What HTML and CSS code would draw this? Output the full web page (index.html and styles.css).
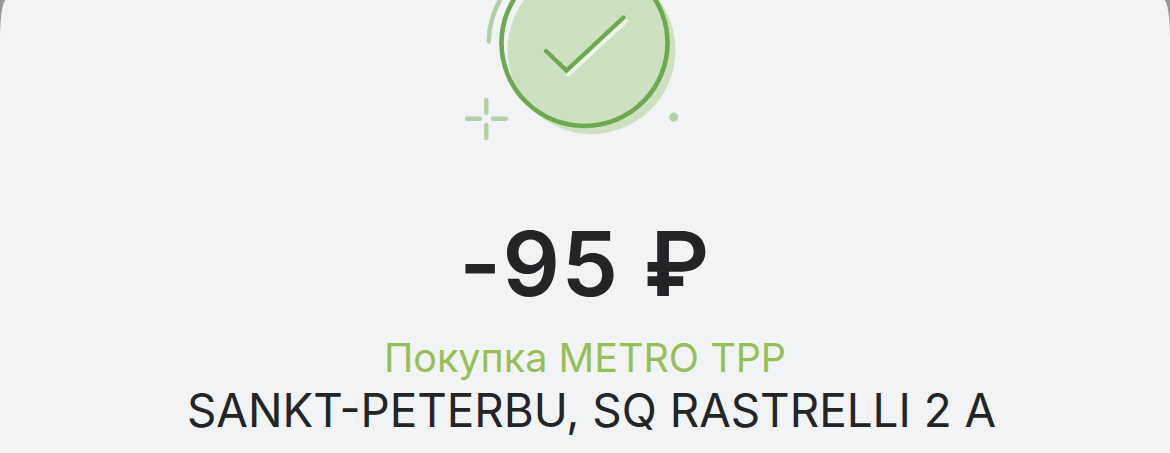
FILE: index.html
```html
<!doctype html>
<html lang="en">
<head>
    <meta charset="UTF-8">
    <title>Покупка</title>
    <link rel="stylesheet" href="styles.css">
</head>
<body>
<div class="sheet">
    <svg class="statusIcon" width="260" height="142" viewBox="455 0 260 142" fill="none" stroke-linecap="round">
        <circle cx="591.5" cy="50" r="84" fill="#cde0c2"/>
        <circle cx="584.5" cy="43" r="83" stroke="#6ea950" stroke-width="4.6"/>
        <path d="M568 74.5 L626 21" stroke="#f0f5ec" stroke-width="4"/>
        <path d="M546 51 L566.5 70.5 L623.5 17.5" stroke="#6ea950" stroke-width="4.4" stroke-linejoin="miter"/>
        <path d="M488.7 41.5 C489 26 493 12 501 -2" stroke="#b3cfa8" stroke-width="4.4"/>
        <path d="M467 118.7 H480 M493 118.7 H506 M486.3 100 V113 M486.3 125 V138" stroke="#b3cfa8" stroke-width="4.4"/>
        <circle cx="673.7" cy="117" r="4.5" fill="#b3cfa8"/>
    </svg>
    <div class="amount">-95 ₽</div>
    <div class="title">Покупка METRO TPP</div>
    <div class="place">SANKT-PETERBU, SQ RASTRELLI 2 A</div>
</div>
</body>
</html>
```

FILE: styles.css
```css
* {
    padding: 0;
    margin: 0;
}

html, body {
    height: 100%;
}

body {
    background-color: #97989a;
    overflow: hidden;
}

.sheet {
    display: flex;
    flex-direction: column;
    align-items: center;
    height: 453px;
    background-color: #f2f3f5;
    border-radius: 6px 6px 0 0 / 38px 38px 0 0;
    font-family: Inter, "Noto Sans", sans-serif;
    white-space: nowrap;
}

.statusIcon {
    display: block;
    flex-shrink: 0;
}

.amount {
    margin-top: 72px;
    font-size: 90px;
    line-height: 100px;
    font-weight: 600;
    letter-spacing: 1.5px;
    color: #232426;
}

.title {
    margin-top: 20px;
    font-size: 39.5px;
    line-height: 48px;
    color: #96bf58;
}

.place {
    margin-top: 2px;
    margin-left: 13px;
    font-size: 45.8px;
    line-height: 54px;
    color: #232426;
}
```
